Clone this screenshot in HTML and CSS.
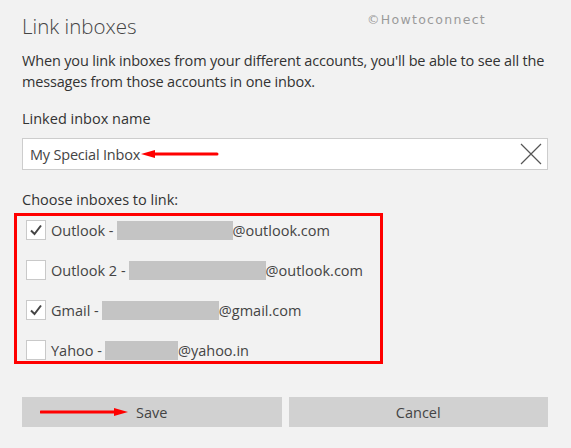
FILE: index.html
```html
<!DOCTYPE html>
<html lang="en">
<head>
<meta charset="utf-8">
<title>Link inboxes</title>
<link rel="stylesheet" href="styles.css">
</head>
<body>
<div class="watermark">©Howtoconnect</div>
<main class="dialog">
  <h1 class="title">Link inboxes</h1>
  <p class="desc">When you link inboxes from your different accounts, you'll be able to see all the messages from those accounts in one inbox.</p>

  <div class="field-label">Linked inbox name</div>
  <div class="input">
    <span class="input-text">My Special Inbox</span>
    <svg class="arrow-left" width="78" height="10" viewBox="0 0 78 10">
      <path d="M12 5 H76" stroke="#f00" stroke-width="3" stroke-linecap="round"/>
      <path d="M0 5 L14 1 L14 9 Z" fill="#f00"/>
    </svg>
    <svg class="clear" width="22" height="22" viewBox="0 0 22 22">
      <path d="M1 1 L21 21 M21 1 L1 21" stroke="#555" stroke-width="1.2"/>
    </svg>
  </div>

  <div class="choose-label">Choose inboxes to link:</div>
  <ul class="accounts">
    <li class="account">
      <span class="cb"><svg width="18" height="18" viewBox="0 0 18 18"><path d="M4 9.5 L7.5 13 L14 4.5" fill="none" stroke="#444" stroke-width="2"/></svg></span>
      <span class="name">Outlook -</span><span class="redact r1"></span><span class="domain">@outlook.com</span>
    </li>
    <li class="account">
      <span class="cb"></span>
      <span class="name">Outlook 2 -</span><span class="redact r2"></span><span class="domain">@outlook.com</span>
    </li>
    <li class="account">
      <span class="cb"><svg width="18" height="18" viewBox="0 0 18 18"><path d="M4 9.5 L7.5 13 L14 4.5" fill="none" stroke="#444" stroke-width="2"/></svg></span>
      <span class="name">Gmail -</span><span class="redact r3"></span><span class="domain">@gmail.com</span>
    </li>
    <li class="account">
      <span class="cb"></span>
      <span class="name">Yahoo -</span><span class="redact r4"></span><span class="domain">@yahoo.in</span>
    </li>
  </ul>

  <div class="actions">
    <button class="btn save">
      <svg class="arrow-right" width="90" height="10" viewBox="0 0 90 10">
        <path d="M1 5 H76" stroke="#f00" stroke-width="3" stroke-linecap="round"/>
        <path d="M88 5 L74 1 L74 9 Z" fill="#f00"/>
      </svg>
      Save
    </button>
    <button class="btn">Cancel</button>
  </div>
</main>
</body>
</html>
```

FILE: styles.css
```css
html, body {
  margin: 0;
  padding: 0;
}

body {
  width: 571px;
  height: 448px;
  overflow: hidden;
  position: relative;
  background: #f2f2f2;
  font-family: "Open Sans", "Noto Sans", sans-serif;
  color: #333;
}

.watermark {
  position: absolute;
  left: 367px;
  top: 12px;
  letter-spacing: 1.3px;
  color: #9a9a9a;
  font-family: "DejaVu Sans", sans-serif;
  font-size: 12.5px;
}

.dialog {
  padding: 0 23px 0 22px;
  display: flex;
  flex-direction: column;
}

.title {
  margin: 12px 0 0;
  font-size: 20.5px;
  line-height: 28px;
  font-weight: 300;
  color: #444;
}

.desc {
  margin: 10px 0 0;
  font-size: 14.5px;
  letter-spacing: -0.17px;
  line-height: 21px;
}

.field-label {
  margin-top: 17px;
  font-size: 14.5px;
  line-height: 20px;
}

.input {
  margin-top: 9px;
  height: 30px;
  background: #fff;
  border: 1px solid #cdcdcd;
  display: flex;
  align-items: center;
  padding-left: 7px;
  position: relative;
}

.input-text {
  font-size: 14.5px;
  color: #444;
  letter-spacing: -0.2px;
}

.arrow-left {
  margin-left: 1px;
  flex: none;
}

.clear {
  position: absolute;
  right: 5px;
  top: 4px;
}

.choose-label {
  margin-top: 20px;
  font-size: 14.5px;
  line-height: 20px;
}

.accounts {
  list-style: none;
  margin: 3px 0 0 -8px;
  padding: 4px 0 0 9px;
  width: 354px;
  height: 141px;
  border: 3px solid #f00;
  display: flex;
  flex-direction: column;
  gap: 20px;
}

.account {
  display: flex;
  align-items: center;
  height: 20px;
  font-size: 14.5px;
  color: #444;
}

.cb {
  box-sizing: border-box;
  width: 20px;
  height: 20px;
  background: #fff;
  border: 1px solid #c9c9c9;
  margin-right: 5px;
  display: flex;
  align-items: center;
  justify-content: center;
  flex: none;
}

.name {
  margin-right: 3px;
}

.redact {
  height: 19px;
  background: #c4c4c4;
  flex: none;
}

.r1 { width: 116px; }
.r2 { width: 137px; }
.r3 { width: 117px; }
.r4 { width: 73px; }

.actions {
  margin-top: 33px;
  display: flex;
  gap: 7px;
}

.btn {
  position: relative;
  flex: 1;
  height: 30px;
  border: none;
  background: #d1d1d1;
  font-family: inherit;
  font-size: 14.5px;
  color: #444;
  padding: 0;
}

.arrow-right {
  position: absolute;
  left: 18px;
  top: 10px;
}
```
